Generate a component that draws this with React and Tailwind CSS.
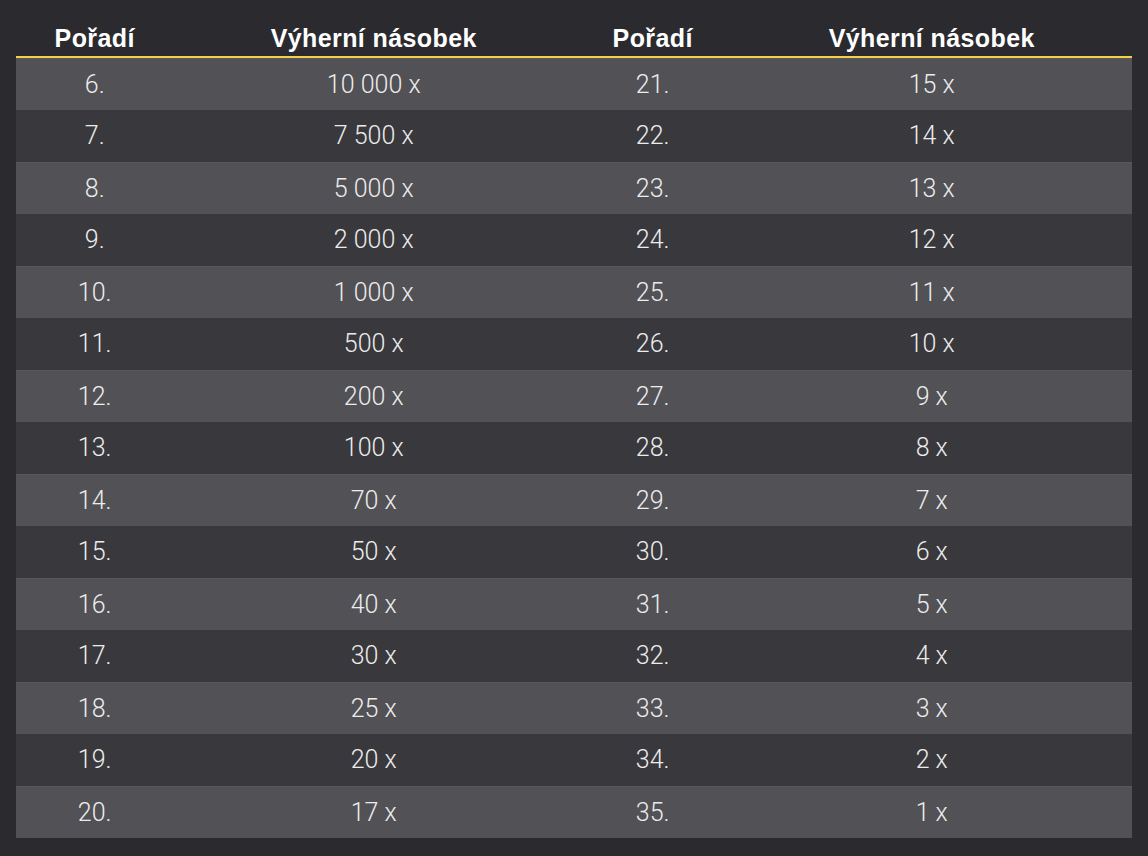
import React from 'react';

const left = [
  ['6.', '10 000 x'], ['7.', '7 500 x'], ['8.', '5 000 x'], ['9.', '2 000 x'], ['10.', '1 000 x'],
  ['11.', '500 x'], ['12.', '200 x'], ['13.', '100 x'], ['14.', '70 x'], ['15.', '50 x'],
  ['16.', '40 x'], ['17.', '30 x'], ['18.', '25 x'], ['19.', '20 x'], ['20.', '17 x'],
];

const right = [
  ['21.', '15 x'], ['22.', '14 x'], ['23.', '13 x'], ['24.', '12 x'], ['25.', '11 x'],
  ['26.', '10 x'], ['27.', '9 x'], ['28.', '8 x'], ['29.', '7 x'], ['30.', '6 x'],
  ['31.', '5 x'], ['32.', '4 x'], ['33.', '3 x'], ['34.', '2 x'], ['35.', '1 x'],
];

const App = () => {
  return (
    <div className="bg-[#2b2a2f] w-[1148px] h-[856px] px-4 pt-4">
      {/* Hlavička */}
      <div className="flex h-[42px] pt-[7px] border-b-2 border-[#f3d04c] text-white font-bold text-[25px] tracking-[0.4px] font-[family-name:'Liberation_Sans',Arial,sans-serif]">
        <div className="w-[158px] text-center leading-[30px]">Pořadí</div>
        <div className="w-[402px] text-center leading-[30px]">Výherní násobek</div>
        <div className="w-[158px] text-center leading-[30px]">Pořadí</div>
        <div className="w-[402px] text-center leading-[30px]">Výherní násobek</div>
      </div>

      {/* Řádky */}
      <div className="flex flex-col font-[family-name:'Roboto',sans-serif] font-light text-[25px] text-[#ececec]">
        {left.map((row, i) => (
          <div
            key={row[0]}
            className={`flex h-[52px] items-center ${i % 2 === 0 ? 'bg-[#525156] border-t border-[#58575c]' : 'bg-[#39383d]'}`}
          >
            <div className="w-[158px] text-center">{row[0]}</div>
            <div className="w-[402px] text-center">{row[1]}</div>
            <div className="w-[158px] text-center">{right[i][0]}</div>
            <div className="w-[402px] text-center">{right[i][1]}</div>
          </div>
        ))}
      </div>
    </div>
  );
};

export default App;
